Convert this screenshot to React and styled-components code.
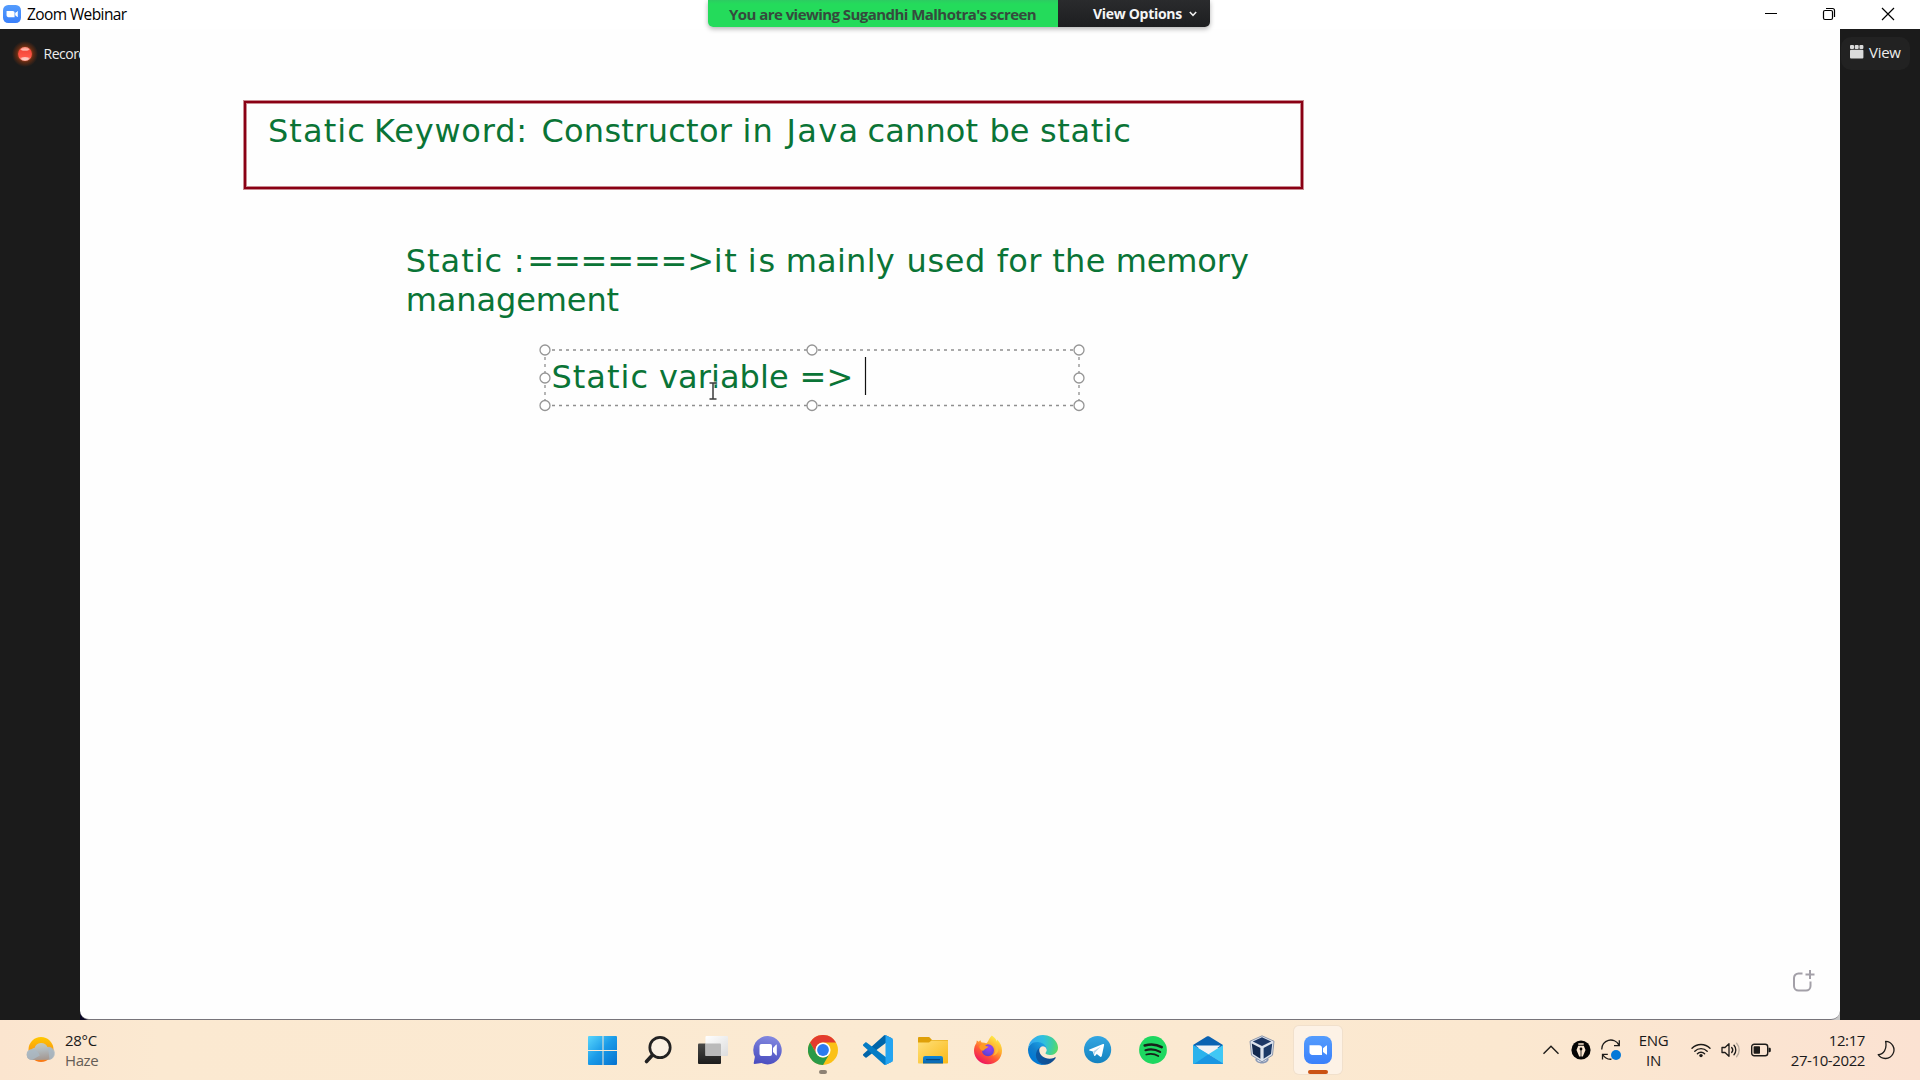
import React from 'react';
import styled, { createGlobalStyle } from 'styled-components';

const GlobalStyle = createGlobalStyle`
  * { box-sizing: border-box; }
  html, body { margin: 0; padding: 0; overflow: hidden; }
  body { font-family: "Open Sans", "Noto Sans", sans-serif; }
  svg { display: block; flex: none; }
`;

const Desktop = styled.div`
  width: 1920px;
  height: 1080px;
  display: flex;
  flex-direction: column;
  background: #1b1b1b;
`;

const Text = styled.span`
  font-size: ${(p) => p.$size || 16}px;
  line-height: ${(p) => p.$line || 20}px;
  font-weight: ${(p) => p.$weight || 400};
  letter-spacing: ${(p) => p.$track || 0}px;
  color: ${(p) => p.$color || '#1a1a1a'};
  white-space: nowrap;
`;

/* ---------- window chrome ---------- */

const TitleBar = styled.header`
  position: relative;
  height: 29px;
  flex: none;
  display: flex;
  align-items: flex-start;
  justify-content: space-between;
  background: #fff;
`;

const AppTitle = styled.div`
  display: flex;
  align-items: center;
  gap: 6px;
  height: 28px;
  padding-left: 3px;
`;

const WindowButtons = styled.div`
  display: flex;
  height: 28px;
  padding-right: 3px;
`;

const WindowButton = styled.div`
  width: 58.5px;
  display: flex;
  align-items: center;
  justify-content: center;
`;

const ShareBanner = styled.div`
  position: absolute;
  z-index: 2;
  left: 708px;
  top: 0;
  display: flex;
  height: 27px;
  border-radius: 0 0 5px 5px;
  overflow: hidden;
  box-shadow: 0 2px 5px rgba(0, 0, 0, 0.3);
`;

const ShareStatus = styled.div`
  width: 350px;
  padding-left: 21px;
  display: flex;
  align-items: center;
  background: linear-gradient(#2ccc61 0, #24db5b 4px, #24db5b);
`;

const ShareOptions = styled.div`
  width: 152px;
  padding-left: 35px;
  display: flex;
  align-items: center;
  gap: 7px;
  background: linear-gradient(#2a2b2d, #1d1e20);
`;

/* ---------- meeting stage ---------- */

const Stage = styled.main`
  display: flex;
  height: 991px;
  flex: none;
`;

const Side = styled.aside`
  width: 80px;
  flex: none;
  overflow: hidden;
  background: #1b1b1b;
`;

const Recording = styled.div`
  display: flex;
  align-items: center;
  margin-top: 12px;
  padding-left: 12px;
  gap: 5.500px;
`;

const ViewButton = styled.div`
  display: flex;
  align-items: center;
  gap: 5px;
  width: 69px;
  height: 33px;
  margin: 8px 0 0 1px;
  padding: 0 0 4px 9px;
  border-radius: 10px;
  background: #222;
`;

const BoardFrame = styled.section`
  width: 1760px;
  background: linear-gradient(90deg, #0a0824 50%, #c8c8c8 50%);
`;

const Board = styled.div`
  position: relative;
  height: 991px;
  background: #fefefe;
  border-bottom: 1px solid #77747a;
  border-radius: 0 0 9px 9px;
`;

const Note = styled.div`
  position: absolute;
  left: ${(p) => p.$x}px;
  top: ${(p) => p.$y}px;
  font-family: "DejaVu Sans", Verdana, sans-serif;
  font-size: 32px;
  line-height: 39px;
  color: #0a7436;
  white-space: pre;
`;

const NoteLine = styled.div`
  display: flex;
`;

const Word = styled.span`
  flex: none;
  width: ${(p) => (p.$w ? `${p.$w}px` : 'auto')};
  letter-spacing: ${(p) => p.$track || 0}px;
`;

const HeadingFrame = styled.div`
  position: absolute;
  left: 163px;
  top: 71px;
  width: 1061px;
  height: 90px;
  border: 1px solid #c98a90;
  box-shadow: inset 0 0 0 2px #8a0014, inset 0 0 0 3px #c98a90;
`;

const Selection = styled.svg`
  position: absolute;
  left: 456px;
  top: 312px;
`;

const AddPage = styled.svg`
  position: absolute;
  left: 1712px;
  top: 940px;
`;

/* ---------- taskbar ---------- */

const Taskbar = styled.footer`
  height: 60px;
  flex: none;
  display: flex;
  background: linear-gradient(90deg, #fbe5cf 0, #fbe9d1 160px, #fbead2 900px, #fbe8d0 1500px, #fbe2d2 1920px);
`;

const Weather = styled.div`
  width: 575px;
  display: flex;
  align-items: center;
  gap: 9px;
  padding-left: 26px;
`;

const Stack = styled.div`
  display: flex;
  flex-direction: column;
  align-items: ${(p) => p.$align || 'flex-start'};
`;

const Apps = styled.nav`
  display: flex;
  align-items: center;
  width: 770px;
`;

const AppCell = styled.div`
  width: 55px;
  height: 60px;
  display: flex;
  align-items: center;
  justify-content: center;
`;

const AppTile = styled.div`
  position: relative;
  width: 48px;
  height: 48px;
  display: flex;
  align-items: center;
  justify-content: center;
  border-radius: 5px;
  background: ${(p) => (p.$active ? '#fdf2e6' : 'transparent')};
  box-shadow: ${(p) => (p.$active ? '0 0 0 1px #f1e0cc' : 'none')};
`;

const Indicator = styled.i`
  position: absolute;
  bottom: 0;
  width: ${(p) => (p.$active ? 20 : 8)}px;
  height: 4px;
  border-radius: 2px;
  background: ${(p) => (p.$active ? '#cb5213' : '#8d8274')};
`;

const Tray = styled.div`
  flex: 1;
  display: flex;
  align-items: center;
  padding-left: 197px;
`;

const TrayItem = styled.div`
  width: ${(p) => p.$w}px;
  flex: none;
  display: flex;
  justify-content: ${(p) => p.$justify || 'center'};
`;

/* ---------- icons ---------- */

const ZoomIcon = ({ size }) => (
  <svg width={size} height={size} viewBox="0 0 28 28">
    <defs>
      <linearGradient id="zoomBlue" x1="0" y1="0" x2="0" y2="1">
        <stop offset="0" stopColor="#549cfd" />
        <stop offset="1" stopColor="#3a80fb" />
      </linearGradient>
    </defs>
    <rect width="28" height="28" rx="8" fill="url(#zoomBlue)" />
    <path d="M5.500 9.200h9.600c1.800 0 2.900 1.200 2.900 2.900V19H8.400c-1.800 0-2.900-1.200-2.900-2.900z" fill="#fff" />
    <path d="M19 12.300l3.300-2.700c.4-.3.700-.2.700.3v8.400c0 .5-.3.600-.7.300L19 15.900z" fill="#fff" />
  </svg>
);

const WindowsIcon = () => (
  <svg width="30" height="30" viewBox="0 0 30 30">
    <defs>
      <linearGradient id="win" gradientUnits="userSpaceOnUse" x1="0" y1="0" x2="29" y2="29">
        <stop offset="0" stopColor="#5cd8fd" />
        <stop offset=".5" stopColor="#1a9be8" />
        <stop offset="1" stopColor="#0573d0" />
      </linearGradient>
    </defs>
    <path d="M1 1h13.500v14H0V2a1 1 0 0 1 1-1zM15.500 1H28a1 1 0 0 1 1 1v13H15.500zM0 16h14.500v14H1a1 1 0 0 1-1-1zM15.500 16H29v13a1 1 0 0 1-1 1H15.500z" fill="url(#win)" />
  </svg>
);

const SearchIcon = () => (
  <svg width="30" height="30" viewBox="0 0 30 30" fill="none" stroke="#222" strokeLinecap="round">
    <circle cx="17" cy="12.500" r="10.200" fill="#faf0e2" strokeWidth="2.700" />
    <path d="M9 20.500L3.500 26.500" strokeWidth="3.600" />
  </svg>
);

const TaskViewIcon = () => (
  <svg width="30" height="30" viewBox="0 0 30 30">
    <defs>
      <linearGradient id="tvDark" x1="0" y1="0" x2="0" y2="1">
        <stop offset="0" stopColor="#4a4a48" />
        <stop offset="1" stopColor="#1c1c1c" />
      </linearGradient>
      <linearGradient id="tvLight" x1="0" y1="0" x2="1" y2="1">
        <stop offset="0" stopColor="#ffffff" />
        <stop offset="1" stopColor="#dcdcdc" />
      </linearGradient>
    </defs>
    <rect x="0" y="8.500" width="23" height="20.500" rx="1" fill="url(#tvDark)" />
    <rect x="7.500" y="1" width="22.500" height="20" rx="1" fill="url(#tvLight)" />
    <path d="M7.500 8.500H22a1 1 0 0 1 1 1V21H7.500z" fill="#bababa" />
  </svg>
);

const ChatIcon = () => (
  <svg width="30" height="30" viewBox="0 0 30 30">
    <defs>
      <linearGradient id="chat" x1=".6" y1="0" x2=".4" y2="1">
        <stop offset="0" stopColor="#8389e0" />
        <stop offset=".5" stopColor="#6469cf" />
        <stop offset="1" stopColor="#4b4ec0" />
      </linearGradient>
    </defs>
    <path d="M15 1a14.200 14.200 0 1 1-6.400 27.100L1.500 29c-.6 0-.9-.4-.8-.9l1.200-6.300A14.200 14.200 0 0 1 15 1z" fill="url(#chat)" />
    <rect x="6.500" y="9" width="12.500" height="12" rx="2" fill="#fff" />
    <path d="M20 13l3-3.200c.4-.4.800-.2.800.3v9.800c0 .5-.4.700-.8.300L20 17z" fill="#fff" />
  </svg>
);

const ChromeIcon = () => (
  <svg width="30" height="30" viewBox="0 0 30 30">
    <circle cx="15" cy="15" r="15" fill="#fbc116" />
    <path d="M2 7.500A15 15 0 0 1 28 7.500H15A7.500 7.500 0 0 0 8.500 11.250L8.500 18.750z" fill="#e33b2e" />
    <path d="M2 7.500A15 15 0 0 0 15 30L21.500 18.750A7.500 7.500 0 0 1 8.500 18.750z" fill="#2a9a48" />
    <circle cx="15" cy="15" r="7.600" fill="#fff" />
    <circle cx="15" cy="15" r="5.900" fill="#2d7bee" />
  </svg>
);

const CodeIcon = () => (
  <svg width="30" height="30" viewBox="0 0 100 100">
    <path d="M96.500 10.800L75.900.9c-2.400-1.200-5.200-.7-7.100 1.200L1.300 63.200c-1.800 1.700-1.800 4.500 0 6.200l5.500 5c1.500 1.400 3.700 1.500 5.300.3l81.200-61.600c2.700-2.100 6.600-.1 6.600 3.300v-.2c0-2.400-1.300-4.500-3.400-5.400z" fill="#0065a9" />
    <path d="M96.500 89.200L75.900 99.100c-2.400 1.200-5.200.7-7.100-1.200L1.300 36.800c-1.800-1.700-1.800-4.500 0-6.200l5.500-5c1.500-1.400 3.700-1.500 5.300-.3l81.200 61.600c2.700 2.100 6.600.1 6.600-3.300v.2c0 2.400-1.300 4.500-3.400 5.400z" fill="#047cc5" />
    <path d="M75.900 99.100c-2.400 1.200-5.200.7-7.100-1.200 2.300 2.300 6.200.7 6.200-2.600V4.700c0-3.300-3.900-4.900-6.200-2.600 1.900-1.900 4.700-2.400 7.100-1.200l20.600 9.900c2.200 1 3.500 3.200 3.500 5.600v67.200c0 2.400-1.300 4.600-3.500 5.600z" fill="#24a4f1" />
  </svg>
);

const FolderIcon = () => (
  <svg width="30" height="30" viewBox="0 0 30 30">
    <defs>
      <linearGradient id="folder" x1="0" y1="0" x2="1" y2="1">
        <stop offset="0" stopColor="#ffe07a" />
        <stop offset="1" stopColor="#f9b918" />
      </linearGradient>
      <linearGradient id="folderBlue" x1="0" y1="0" x2="0" y2="1">
        <stop offset="0" stopColor="#0d86da" />
        <stop offset="1" stopColor="#0a65ac" />
      </linearGradient>
    </defs>
    <path d="M0 3.200C0 2.500.5 2 1.200 2h9c1 0 1.500.4 2 1l1.800 2h15c.6 0 1 .4 1 1v3H0z" fill="#dfa008" />
    <path d="M0 7.500h11l2.500-2H29c.6 0 1 .4 1 1v21c0 .6-.4 1-1 1H1c-.6 0-1-.4-1-1z" fill="url(#folder)" />
    <path d="M5 28.500v-5.300C5 21.900 5.900 21 7.200 21h15.600c1.300 0 2.200.9 2.200 2.200v5.300z" fill="url(#folderBlue)" />
    <path d="M8.500 24.600h13" stroke="#07477f" strokeWidth="1.100" strokeLinecap="round" />
  </svg>
);

const FirefoxIcon = () => (
  <svg width="30" height="30" viewBox="0 0 30 30">
    <defs>
      <linearGradient id="ff" x1=".8" y1=".05" x2=".25" y2=".95">
        <stop offset="0" stopColor="#fff04a" />
        <stop offset=".35" stopColor="#ffb02e" />
        <stop offset=".65" stopColor="#ff5836" />
        <stop offset="1" stopColor="#ee1460" />
      </linearGradient>
      <radialGradient id="ffCore" cx=".6" cy=".3" r=".8">
        <stop offset="0" stopColor="#a23ff0" />
        <stop offset=".6" stopColor="#6a45e0" />
        <stop offset="1" stopColor="#5a3bc2" />
      </radialGradient>
    </defs>
    <path d="M18.800.5c3 1.800 4.500 4 5 6.200 0-.9.300-1.700.2-2.200 3.500 3.200 5 7.200 5 11.300C29 23.500 22.800 29.300 15 29.300S1 23.300 1 15.800c0-3 .9-5.800 2.400-7.900l.4-2.300 2 1.100C6.300 6 7 5.500 7.500 5.200c.1.900.5 1.600 1.200 2.200 1.700-.1 3.200.1 4.500.8C15.300 7.700 15 4.500 18.800.5z" fill="url(#ff)" />
    <circle cx="15" cy="15.200" r="6" fill="url(#ffCore)" />
    <path d="M6.300 11.200c2.200-2.200 5.200-3 7.900-1.800-1 .4-1.800 1-2 1.700 1 .3 2.300.2 3.200.4-.3 1.300-2.200 1.700-3.300 2.400-.9.700-1 1.800-2.500 1.800-1.800 0-3.300-2.200-3.300-4.500z" fill="#ff9a24" />
    <path d="M20.800 9.500c2.700 3.200 2.300 8.500-1.300 11 5-.6 7-5.200 5.500-9.300-.7-2-2.600-3-4.200-1.700z" fill="#ffc63a" opacity=".75" />
  </svg>
);

const EdgeIcon = () => (
  <svg width="30" height="30" viewBox="0 0 256 256">
    <defs>
      <linearGradient id="edgeA" gradientUnits="userSpaceOnUse" x1="63" y1="176" x2="242" y2="176">
        <stop offset="0" stopColor="#0c59a4" />
        <stop offset="1" stopColor="#114a8b" />
      </linearGradient>
      <linearGradient id="edgeB" gradientUnits="userSpaceOnUse" x1="150" y1="100" x2="46" y2="220">
        <stop offset="0" stopColor="#1b9de2" />
        <stop offset=".5" stopColor="#127fcc" />
        <stop offset="1" stopColor="#0078d4" />
      </linearGradient>
      <radialGradient id="edgeC" gradientUnits="userSpaceOnUse" cx="26" cy="60" r="250">
        <stop offset="0" stopColor="#35a8f0" />
        <stop offset=".45" stopColor="#2fc0df" />
        <stop offset=".75" stopColor="#40cf9c" />
        <stop offset="1" stopColor="#66dd50" />
      </radialGradient>
    </defs>
    <path d="M231 190.500c-3.400 1.800-6.900 3.400-10.500 4.700a101.900 101.900 0 0 1-35.900 6.500c-47.300 0-88.500-32.500-88.500-74.300 0-11.400 6.400-21.900 16.400-27.300-42.800 1.800-53.800 46.400-53.800 72.500 0 73.900 68.100 81.400 82.800 81.400 7.900 0 19.800-2.300 27-4.600l1.300-.4a128.300 128.300 0 0 0 66.600-52.800 4 4 0 0 0-5.400-5.700z" fill="url(#edgeA)" />
    <path d="M105.700 241.400a79.200 79.200 0 0 1-22.700-21.300A80.700 80.700 0 0 1 112.500 100c3.100-1.400 8.400-4.100 15.500-4a32.400 32.400 0 0 1 25.700 13 31.900 31.900 0 0 1 6.300 18.700c0-.2 24.500-79.600-80-79.600-43.900 0-80 41.600-80 78.200a130.200 130.200 0 0 0 12.100 56 128 128 0 0 0 156.400 67.100 75.500 75.500 0 0 1-62.800-8z" fill="url(#edgeB)" />
    <path d="M152.300 148.900c-.9 1-3.400 2.500-3.400 5.600 0 2.600 1.700 5.200 4.800 7.300 14.400 10.100 41.700 8.700 41.800 8.700a59.600 59.600 0 0 0 30.300-8.300A61.400 61.400 0 0 0 256 109.200c.3-22.400-8-37.300-11.300-43.900C223.500 23.900 177.700 0 128 0A128 128 0 0 0 0 126.200c.5-36.500 36.800-66 80-66 3.500 0 23.500.3 42 10.100 16.300 8.600 24.900 18.900 30.800 29.200 6.200 10.700 7.300 24.100 7.300 29.500s-2.700 13.300-7.800 19.900z" fill="url(#edgeC)" />
  </svg>
);

const TelegramIcon = () => (
  <svg width="30" height="30" viewBox="0 0 30 30">
    <defs>
      <linearGradient id="tg" x1="0" y1="0" x2="0" y2="1">
        <stop offset="0" stopColor="#33a6e2" />
        <stop offset="1" stopColor="#1482bf" />
      </linearGradient>
    </defs>
    <circle cx="14.600" cy="14.700" r="13.600" fill="url(#tg)" />
    <path d="M6.500 14.500L20 9.100c.7-.3 1.300.2 1.100 1l-2.300 11c-.2.800-.9 1-1.500.6l-3.500-2.600-1.800 1.800c-.4.300-.8.200-.9-.3l-1.300-4.200-3.400-1c-.6-.2-.6-.7.200-.9z" fill="#fff" />
    <path d="M10.300 16.200l7.500-4.600-5.700 6-.3 2.600z" fill="#b5d6ea" />
  </svg>
);

const SpotifyIcon = () => (
  <svg width="30" height="30" viewBox="0 0 30 30" fill="none" stroke="#17211a" strokeLinecap="round">
    <circle cx="15" cy="15" r="13.900" fill="#1ed760" stroke="none" />
    <path d="M6.700 10.500c5.600-1.600 12.300-1 17 1.700" strokeWidth="2.600" />
    <path d="M7.500 15.200c4.900-1.400 10.400-.7 14.600 1.700" strokeWidth="2.200" />
    <path d="M8.300 19.500c4-1.100 8.500-.6 12 1.500" strokeWidth="1.800" />
  </svg>
);

const MailIcon = () => (
  <svg width="30" height="30" viewBox="0 0 30 30">
    <defs>
      <linearGradient id="mail" x1="0" y1="0" x2="1" y2="1">
        <stop offset="0" stopColor="#2cb5ee" />
        <stop offset="1" stopColor="#0f86d8" />
      </linearGradient>
    </defs>
    <path d="M0 10L13.800 1.500c.8-.5 1.600-.5 2.400 0L30 10v3H0z" fill="#0a62b2" />
    <path d="M2.500 10.500h25L15 20.500z" fill="#f2f2f4" />
    <path d="M0 10l30 19H1a1 1 0 0 1-1-1z" fill="url(#mail)" />
    <path d="M30 10L15.500 19.200 30 28.500z" fill="#40c8f5" />
    <path d="M15.500 19.200L1 29h28.300c.4 0 .7-.3.700-.7z" fill="#1a96e2" />
    <path d="M0 10l15.500 9.200L1 29a1 1 0 0 1-1-1z" fill="#2ab2ec" />
  </svg>
);

const VirtualBoxIcon = () => (
  <svg width="30" height="30" viewBox="1.500 0 30 30">
    <path d="M9 23.500c-1 2.800 2.800 5 6.500 5s7.300-2.200 6.500-5z" fill="#8b99b5" />
    <path d="M11 24.500c1 2.500 7.500 2.500 9 0" stroke="#e8ebf0" strokeWidth="1.200" fill="none" />
    <path d="M15.500.8l12 5.400-1.500 14-10.500 6.600L5 20.200 3.500 6.200z" fill="#dce2ec" stroke="#75849f" strokeWidth=".8" strokeLinejoin="round" />
    <path d="M15.500 2.300l9.200 4.100-9.200 4.700-9.200-4.700z" fill="#1c3766" />
    <path d="M5.300 8.500l8.600 4.400v10.800l-7.400-4.600z" fill="#13294f" />
    <path d="M25.700 8.500l-8.600 4.400v10.800l7.400-4.600z" fill="#1c3a68" />
  </svg>
);

const WeatherIcon = () => (
  <svg width="30" height="30" viewBox="0 0 30 30">
    <defs>
      <linearGradient id="sun" x1="0" y1="0" x2="0" y2="1">
        <stop offset="0" stopColor="#ffc800" />
        <stop offset="1" stopColor="#f77718" />
      </linearGradient>
      <linearGradient id="cloud" x1="0" y1="0" x2=".2" y2="1">
        <stop offset="0" stopColor="#cfcfb6" />
        <stop offset=".5" stopColor="#b1b9bd" />
        <stop offset="1" stopColor="#a59b96" />
      </linearGradient>
    </defs>
    <circle cx="15" cy="14.500" r="12.500" fill="url(#sun)" />
    <path d="M6 25a6 5.400 0 0 1-.2-10.700A3 3 0 0 1 8.500 13 7 7 0 0 1 21.500 12 6.500 6.500 0 0 1 23.500 24.700z" fill="url(#cloud)" />
    <path d="M6 25A6 5.400 0 0 1 5.800 14.300c3.500-.4 6.800 2.700 8 6.200M22 11.800A6.500 6.500 0 0 1 23.500 24.700" fill="#a9b9c6" opacity=".75" />
  </svg>
);

const TRAY_INK = '#1d1b19';

const ChevronUp = () => (
  <svg width="18" height="10" viewBox="0 0 18 10" fill="none" stroke={TRAY_INK} strokeWidth="1.400">
    <path d="M1.500 8.800L9 1.300l7.500 7.500" />
  </svg>
);

const PenIcon = () => (
  <svg width="20" height="20" viewBox="0 0 20 20">
    <circle cx="10" cy="10" r="9.600" fill="#050505" />
    <path d="M7.300 3.200h5.400v1.500H7.300zM7.200 5.800h5.600l1.700 4.200-2.700 6.500H8.200L5.500 10z" fill="#fbe6d0" />
    <circle cx="10" cy="9" r="1.400" fill="#050505" />
    <path d="M10 10v7" stroke="#050505" strokeWidth=".8" />
  </svg>
);

const SyncIcon = () => (
  <svg width="22" height="22" viewBox="0 0 22 22" fill="none" stroke={TRAY_INK} strokeWidth="1.300">
    <path d="M1.800 10.500a9 9 0 0 1 17-4.600M19.300 1.300v5.300h-5.300" />
    <path d="M2.500 20.500v-5.200h5.300M2.800 15.500a9 9 0 0 0 8.700 4.700" />
    <circle cx="16" cy="16" r="5" fill="#0479d8" stroke="none" />
  </svg>
);

const WifiIcon = () => (
  <svg width="20" height="16" viewBox="0 0 20 16" fill="none" stroke={TRAY_INK} strokeWidth="1.400" strokeLinecap="round">
    <path d="M1 6.300a12.600 12.600 0 0 1 18 0M3.800 9.200a8.800 8.800 0 0 1 12.400 0M6.400 11.800a5.100 5.100 0 0 1 7.200 0" />
    <circle cx="10" cy="13.600" r="1.700" fill={TRAY_INK} stroke="none" />
  </svg>
);

const SpeakerIcon = () => (
  <svg width="20" height="16" viewBox="0 0 20 16" fill="none" stroke={TRAY_INK} strokeWidth="1.300" strokeLinecap="round" strokeLinejoin="round">
    <path d="M1 5.500h3L8 1.700v12.600l-4-3.800H1z" />
    <path d="M10.700 5.500a3.800 3.800 0 0 1 0 5M13 3.300a7 7 0 0 1 0 9.400" />
    <path d="M15.600 1.300a10 10 0 0 1 0 13.400" stroke="#b9ab9d" />
  </svg>
);

const BatteryIcon = () => (
  <svg width="20" height="14" viewBox="0 0 20 14">
    <rect x=".7" y="1.200" width="16" height="11.600" rx="2.500" fill="none" stroke={TRAY_INK} strokeWidth="1.400" />
    <rect x="2.600" y="3.200" width="6.400" height="7.600" rx=".8" fill={TRAY_INK} />
    <path d="M17.500 4.800h1c.8 0 1.300.5 1.300 1.200v2c0 .7-.5 1.200-1.300 1.200h-1z" fill={TRAY_INK} />
  </svg>
);

const MoonIcon = () => (
  <svg width="18" height="20" viewBox="0 0 18 20" fill="none" stroke={TRAY_INK} strokeWidth="1.300" strokeLinejoin="round">
    <path d="M8.600 1.300a8.600 8.600 0 1 1-7.400 13.400c5.300-.3 9.100-5.500 7.400-13.400z" />
  </svg>
);

const RecordDot = () => (
  <svg width="26" height="26" viewBox="0 0 26 26">
    <defs>
      <radialGradient id="glow">
        <stop offset=".4" stopColor="#b8401c" />
        <stop offset=".65" stopColor="#5a2a14" />
        <stop offset="1" stopColor="#1b1b1b" />
      </radialGradient>
      <linearGradient id="dot" x1="0" y1="0" x2="0" y2="1">
        <stop offset="0" stopColor="#ff9c8c" />
        <stop offset=".25" stopColor="#f4483a" />
        <stop offset=".7" stopColor="#ff5748" />
        <stop offset="1" stopColor="#ffb3a6" />
      </linearGradient>
    </defs>
    <circle cx="13" cy="13" r="13" fill="url(#glow)" />
    <circle cx="13" cy="13" r="6.900" fill="url(#dot)" />
    <ellipse cx="13" cy="8.500" rx="4" ry="1.300" fill="#ffc9be" opacity=".8" />
    <ellipse cx="13" cy="17.500" rx="3.800" ry="1.500" fill="#ffd9d2" opacity=".8" />
  </svg>
);

const GalleryIcon = () => (
  <svg width="14" height="14" viewBox="0 0 14 14" fill="#dadada">
    <rect x="0" y="0" width="4" height="4" rx="1" />
    <rect x="4.700" y="0" width="4" height="4" rx="1" />
    <rect x="9.400" y="0" width="4" height="4" rx="1" />
    <rect x="0" y="4.800" width="13.400" height="8.700" rx="1" />
  </svg>
);

const apps = [
  { name: 'start', Icon: WindowsIcon },
  { name: 'search', Icon: SearchIcon },
  { name: 'taskview', Icon: TaskViewIcon },
  { name: 'chat', Icon: ChatIcon },
  { name: 'chrome', Icon: ChromeIcon, running: true },
  { name: 'code', Icon: CodeIcon },
  { name: 'files', Icon: FolderIcon },
  { name: 'firefox', Icon: FirefoxIcon },
  { name: 'edge', Icon: EdgeIcon },
  { name: 'telegram', Icon: TelegramIcon },
  { name: 'spotify', Icon: SpotifyIcon },
  { name: 'mail', Icon: MailIcon },
  { name: 'virtualbox', Icon: VirtualBoxIcon },
  { name: 'zoom', Icon: () => <ZoomIcon size={28} />, running: true, active: true },
];

/* Each word: text, advance to the next word, letter spacing */
const notes = [
  {
    x: 187.9,
    y: 83,
    lines: [[
      ['Static ', 106.1, 1.1], ['Keyword: ', 167.4, 0.8], ['Constructor ', 201, 0.28], ['in ', 44.2, 1.2],
      ['Java ', 80.9, 1.3], ['cannot ', 122.1, 0.16], ['be ', 50.5, 0], ['static', 0, 0.6],
    ]],
  },
  {
    x: 325.7,
    y: 213,
    lines: [
      [
        ['Static ', 108.1, 1], [':', 13.5, 0], ['======>', 186.5, -0.15], ['it ', 33.9, 1.6], ['is ', 38, 1.9],
        ['mainly ', 120.9, 0.26], ['used ', 90.2, 0.6], ['for ', 55.5, 0.35], ['the ', 63.4, 0.3], ['memory', 0, -0.1],
      ],
      [['management', 0, -0.1]],
    ],
  },
  {
    x: 471.5,
    y: 329,
    lines: [[['Static ', 107.4, 1], ['variable ', 140.7, 0.1], ['=>', 0, 0]]],
  },
];

const handles = [[9, 9], [276, 9], [543, 9], [9, 37], [543, 37], [9, 64.5], [276, 64.5], [543, 64.5]];

const SelectedBox = () => (
  <Selection width="552" height="74" viewBox="0 0 552 74">
    <g stroke="#8f8f8f" strokeWidth="1.300" strokeDasharray="3 4" fill="none">
      <path d="M9 9H543M9 64.500H543" />
      <path d="M9 9V64.500M543 9V64.500" />
    </g>
    {handles.map(([x, y]) => (
      <circle key={`${x}-${y}`} cx={x} cy={y} r="5" fill="#fff" stroke="#959595" strokeWidth="1.300" />
    ))}
    <path d="M329.500 16v38" stroke="#111" strokeWidth="1.200" />
    <path d="M173.500 42h7M173.500 58h7M177 42v16" stroke="#fff" strokeWidth="3.500" opacity=".6" />
    <path d="M173.500 42h7M173.500 58h7M177 42v16" stroke="#3c3c3c" strokeWidth="1.500" />
  </Selection>
);

export default function App() {
  return (
    <Desktop>
      <GlobalStyle />
      <TitleBar>
        <AppTitle>
          <ZoomIcon size={18} />
          <Text $size={15.5} $track={-0.6} $color="#000">Zoom Webinar</Text>
        </AppTitle>
        <ShareBanner>
          <ShareStatus>
            <Text $size={15} $weight={700} $track={-0.55} $color="#354a3d">You are viewing Sugandhi Malhotra's screen</Text>
          </ShareStatus>
          <ShareOptions>
            <Text $size={14} $weight={700} $track={-0.3} $color="#f5f5f5">View Options</Text>
            <svg width="8" height="6" viewBox="0 0 8 6" fill="none" stroke="#eee" strokeWidth="1.500">
              <path d="M.8 1L4 4.300 7.200 1" />
            </svg>
          </ShareOptions>
        </ShareBanner>
        <WindowButtons>
          <WindowButton>
            <svg width="14" height="14" viewBox="0 0 14 14" stroke="#000" strokeWidth="1"><path d="M1 6.500h12" /></svg>
          </WindowButton>
          <WindowButton>
            <svg width="14" height="14" viewBox="0 0 14 14" fill="none" stroke="#000" strokeWidth="1.200">
              <rect x="1.500" y="3.500" width="9" height="9" rx="1.500" />
              <path d="M4 1.500h6.500a2 2 0 0 1 2 2V10" />
            </svg>
          </WindowButton>
          <WindowButton>
            <svg width="14" height="14" viewBox="0 0 14 14" stroke="#000" strokeWidth="1.200"><path d="M1 1l12 12M13 1L1 13" /></svg>
          </WindowButton>
        </WindowButtons>
      </TitleBar>

      <Stage>
        <Side>
          <Recording>
            <RecordDot />
            <Text $size={14} $track={-0.5} $color="#ededed">Recording</Text>
          </Recording>
        </Side>
        <BoardFrame>
          <Board>
            <HeadingFrame />
            {notes.map((note) => (
              <Note key={note.y} $x={note.x} $y={note.y}>
                {note.lines.map((line) => (
                  <NoteLine key={line[0][0]}>
                    {line.map(([word, width, track]) => (
                      <Word key={word} $w={width} $track={track}>{word}</Word>
                    ))}
                  </NoteLine>
                ))}
              </Note>
            ))}
            <SelectedBox />
            <AddPage width="24" height="24" viewBox="0 0 24 24" fill="none" stroke="#a3a0a8" strokeWidth="2">
              <path d="M10.500 4.500H6.500a4.500 4.500 0 0 0-4.500 4.500v8a4.500 4.500 0 0 0 4.500 4.500h7.500a4.500 4.500 0 0 0 4.500-4.500v-4.500" />
              <path d="M18 1v9M13.500 5.500h9" />
            </AddPage>
          </Board>
        </BoardFrame>
        <Side>
          <ViewButton>
            <GalleryIcon />
            <Text $size={15} $track={-0.3} $color="#ededed">View</Text>
          </ViewButton>
        </Side>
      </Stage>

      <Taskbar>
        <Weather>
          <WeatherIcon />
          <Stack>
            <Text $size={15} $track={-0.3}>28°C</Text>
            <Text $size={15} $track={-0.4} $color="#645d56">Haze</Text>
          </Stack>
        </Weather>
        <Apps>
          {apps.map(({ name, Icon, running, active }) => (
            <AppCell key={name}>
              <AppTile $active={active}>
                <Icon />
                {running && <Indicator $active={active} />}
              </AppTile>
            </AppCell>
          ))}
        </Apps>
        <Tray>
          <TrayItem $w={18}><ChevronUp /></TrayItem>
          <TrayItem $w={42}><PenIcon /></TrayItem>
          <TrayItem $w={18}><SyncIcon /></TrayItem>
          <TrayItem $w={67}>
            <Stack $align="center">
              <Text $size={15} $track={-0.3}>ENG</Text>
              <Text $size={15} $track={-0.3}>IN</Text>
            </Stack>
          </TrayItem>
          <TrayItem $w={28}><WifiIcon /></TrayItem>
          <TrayItem $w={32}><SpeakerIcon /></TrayItem>
          <TrayItem $w={28}><BatteryIcon /></TrayItem>
          <TrayItem $w={90} $justify="flex-end">
            <Stack $align="flex-end">
              <Text $size={15} $track={-0.4}>12:17</Text>
              <Text $size={15} $track={-0.4}>27-10-2022</Text>
            </Stack>
          </TrayItem>
          <TrayItem $w={42}><MoonIcon /></TrayItem>
        </Tray>
      </Taskbar>
    </Desktop>
  );
}
